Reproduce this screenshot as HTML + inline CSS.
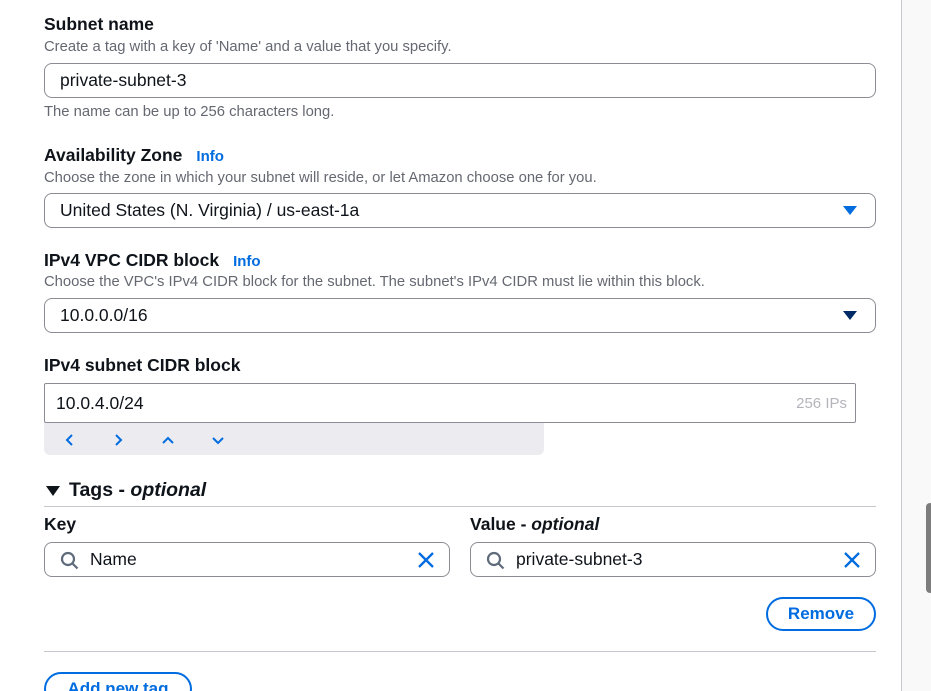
<!DOCTYPE html><html><head><style>
*{margin:0;padding:0;box-sizing:border-box}
html,body{width:931px;height:691px;overflow:hidden}
body{background:#fff;font-family:"Liberation Sans",sans-serif;color:#0f141a;position:relative}
.a{position:absolute;white-space:nowrap}
.lbl{font-size:17.5px;font-weight:bold}
.desc{font-size:14.8px;color:#656871}
.info{font-size:15px;font-weight:bold;color:#006ce0;margin-left:14px}
.inp{position:absolute;border:1px solid #8c8c94;border-radius:8px;background:#fff;font-size:17.5px;padding-left:15px;display:flex;align-items:center}
.tri{position:absolute;right:18px;top:12px;width:0;height:0;border-left:7px solid transparent;border-right:7px solid transparent;border-top:9px solid #006ce0}
.x{position:absolute;right:14px;top:8px}
.btn{position:absolute;border:2px solid #006ce0;border-radius:20px;color:#006ce0;font-weight:bold;font-size:17px;display:flex;align-items:center;justify-content:center}
</style></head><body>
<div class="a lbl" style="left:44px;top:14px">Subnet name</div>
<div class="a desc" style="left:44px;top:39px">Create a tag with a key of 'Name' and a value that you specify.</div>
<div class="inp" style="left:44px;top:63px;width:832px;height:35px">private-subnet-3</div>
<div class="a desc" style="left:44px;top:104px">The name can be up to 256 characters long.</div>

<div class="a lbl" style="left:44px;top:145px">Availability Zone<span class="info">Info</span></div>
<div class="a desc" style="left:44px;top:170px">Choose the zone in which your subnet will reside, or let Amazon choose one for you.</div>
<div class="inp" style="left:44px;top:193px;width:832px;height:35px">United States (N. Virginia) / us-east-1a<div class="tri"></div></div>

<div class="a lbl" style="left:44px;top:250px">IPv4 VPC CIDR block<span class="info">Info</span></div>
<div class="a desc" style="left:44px;top:274px">Choose the VPC's IPv4 CIDR block for the subnet. The subnet's IPv4 CIDR must lie within this block.</div>
<div class="inp" style="left:44px;top:298px;width:832px;height:35px">10.0.0.0/16<div class="tri" style="border-top-color:#002b66"></div></div>

<div class="a lbl" style="left:44px;top:355px">IPv4 subnet CIDR block</div>
<div style="position:absolute;left:44px;top:422px;width:500px;height:33px;background:#ebebf0;border-radius:0 0 6px 6px"></div>
<div class="inp" style="left:44px;top:383px;width:812px;height:40px;border-radius:2px;padding-left:11px">10.0.4.0/24<span style="position:absolute;right:8px;font-size:15px;color:#b4b4bb">256 IPs</span></div>
<svg class="a" style="left:60px;top:432px" width="180" height="16" fill="none" stroke="#006ce0" stroke-width="2">
<path d="M12 3l-5 5 5 5"/><path d="M56 3l5 5-5 5"/><path d="M103 11l5-5 5 5"/><path d="M153 6l5 5 5-5"/></svg>

<div class="a" style="left:46px;top:486px;width:0;height:0;border-left:7px solid transparent;border-right:7px solid transparent;border-top:10px solid #0f141a"></div>
<div class="a" style="left:69px;top:479px;font-size:19.5px;font-weight:bold">Tags - <i>optional</i></div>
<div class="a" style="left:44px;top:506px;width:832px;height:1px;background:#c6c6cd"></div>
<div class="a lbl" style="left:44px;top:514px">Key</div>
<div class="a lbl" style="left:470px;top:514px">Value - <i>optional</i></div>

<div class="inp" style="left:44px;top:542px;width:406px;height:35px;padding-left:45px">Name
<svg class="a" style="left:15px;top:8px" width="20" height="20" fill="none" stroke="#5f6b7a" stroke-width="2.2"><circle cx="8" cy="8" r="6"/><path d="M12.5 12.5l5 5"/></svg>
<svg class="x" width="18" height="18" stroke="#006ce0" stroke-width="2.3"><path d="M2 2l14 14M16 2L2 16"/></svg></div>
<div class="inp" style="left:470px;top:542px;width:406px;height:35px;padding-left:45px">private-subnet-3
<svg class="a" style="left:15px;top:8px" width="20" height="20" fill="none" stroke="#5f6b7a" stroke-width="2.2"><circle cx="8" cy="8" r="6"/><path d="M12.5 12.5l5 5"/></svg>
<svg class="x" width="18" height="18" stroke="#006ce0" stroke-width="2.3"><path d="M2 2l14 14M16 2L2 16"/></svg></div>

<div class="btn" style="left:766px;top:597px;width:110px;height:34px">Remove</div>
<div class="a" style="left:44px;top:651px;width:832px;height:1px;background:#c6c6cd"></div>
<div class="btn" style="left:44px;top:672px;width:148px;height:34px;align-items:flex-start;padding-top:5px">Add new tag</div>

<div class="a" style="left:901px;top:0;width:30px;height:691px;background:#f9f9f9;border-left:1px solid #c6c6cd"></div>
<div class="a" style="left:926px;top:503px;width:8px;height:90px;background:#7d7d7d;border-radius:4px"></div>
</body></html>
